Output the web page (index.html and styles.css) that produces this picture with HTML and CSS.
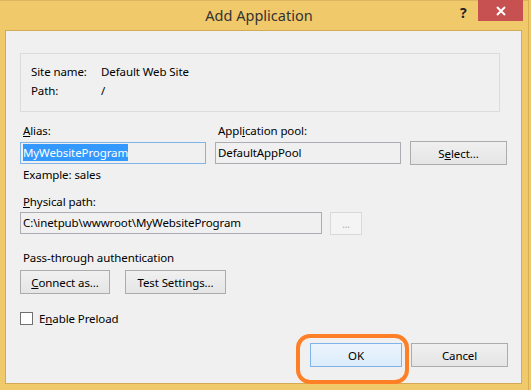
FILE: index.html
```html
<!DOCTYPE html>
<html lang="en">
<head>
    <meta charset="UTF-8">
    <meta name="viewport" content="width=device-width, initial-scale=1.0">
    <title>Add Application</title>
    <link rel="stylesheet" href="styles.css">
</head>
<body>

    <div class="window">
        <!-- 타이틀 바 -->
        <div class="titlebar">
            <div class="title">Add Application</div>
            <div class="help">?</div>
            <div class="close">
                <svg width="10" height="10" viewBox="0 0 10 10">
                    <path d="M1 1 L9 9 M9 1 L1 9" stroke="#fff" stroke-width="2"/>
                </svg>
            </div>
        </div>

        <div class="client">
            <div class="site-box">
                <div class="site-row"><span class="site-key">Site name:</span><span>Default Web Site</span></div>
                <div class="site-row"><span class="site-key">Path:</span><span>/</span></div>
            </div>

            <div class="alias-grid">
                <div class="label"><u>A</u>lias:</div>
                <div class="label">Appl<u>i</u>cation pool:</div>
                <div></div>
                <div class="field focused"><span class="selected">MyWebsiteProgram</span></div>
                <div class="field">DefaultAppPool</div>
                <button class="btn select-btn">S<u>e</u>lect...</button>
            </div>

            <div class="label hint">Example: sales</div>

            <div class="label path-label"><u>P</u>hysical path:</div>
            <div class="path-row">
                <div class="field path-field">C:\inetpub\wwwroot\MyWebsiteProgram</div>
                <button class="btn browse-btn" disabled>...</button>
            </div>

            <div class="label auth-label">Pass-through authentication</div>
            <div class="auth-row">
                <button class="btn connect-btn"><u>C</u>onnect as...</button>
                <button class="btn test-btn">Test Settings...</button>
            </div>

            <label class="check-row">
                <span class="checkbox"></span>
                <span>E<u>n</u>able Preload</span>
            </label>

            <div class="footer">
                <button class="btn ok-btn">OK</button>
                <button class="btn cancel-btn">Cancel</button>
            </div>
        </div>

        <!-- 강조 표시 -->
        <div class="highlight"></div>
    </div>

</body>
</html>
```

FILE: styles.css
```css
/* 기본 */
body {
    margin: 0;
    background-color: #f0c96b;
    font-family: 'Segoe UI', 'Noto Sans', 'Liberation Sans', sans-serif;
    font-size: 11.5px;
    letter-spacing: -0.1px;
    color: #000;
}

/* 창 프레임 */
.window {
    position: relative;
    width: 529px;
    height: 390px;
    border-top: 1px solid #dcb560;
    border-right: 1px solid #d8ae55;
    box-sizing: border-box;
}

.titlebar {
    position: relative;
    height: 29px;
}

.title {
    text-align: center;
    padding-right: 10px;
    padding-top: 4px;
    font-size: 14.5px;
    letter-spacing: 0;
    color: #333;
}

.help {
    position: absolute;
    left: 460px;
    top: 2px;
    font-size: 14px;
    font-weight: bold;
    color: #222;
}

.close {
    position: absolute;
    left: 478px;
    top: -1px;
    width: 45px;
    height: 21px;
    background-color: #c75050;
    display: flex;
    justify-content: center;
    align-items: center;
}

/* 클라이언트 영역 */
.client {
    margin-left: 5px;
    width: 517px;
    height: 354px;
    box-sizing: border-box;
    background-color: #f0f0f0;
    border: 1px solid #d3aa55;
    padding: 22px 13px 0 14px;
    display: flex;
    flex-direction: column;
}

.site-box {
    width: 480px;
    height: 59px;
    box-sizing: border-box;
    border: 1px solid #dcdcdc;
    padding: 8px 10px;
}

.site-row {
    display: flex;
    height: 19px;
    line-height: 19px;
}

.site-key {
    width: 70px;
}

.label {
    line-height: 15px;
    padding-left: 3px;
}

.alias-grid {
    display: grid;
    grid-template-columns: 186px 186px 97px;
    column-gap: 9px;
    row-gap: 3px;
    margin-top: 11px;
    align-items: end;
}

.field {
    height: 22px;
    box-sizing: border-box;
    border: 1px solid #abadb3;
    background-color: #f0f0f0;
    line-height: 20px;
    padding-left: 2px;
    white-space: nowrap;
    overflow: hidden;
}

.field.focused {
    border-color: #7eb4ea;
}

.selected {
    background-color: #3399ff;
    color: #fff;
    padding: 1px 0;
}

/* 버튼 */
.btn {
    font-family: inherit;
    font-size: 11.5px;
    letter-spacing: -0.1px;
    color: #000;
    height: 24px;
    box-sizing: border-box;
    border: 1px solid #acacac;
    background: linear-gradient(#f0f0f0, #e5e5e5);
    padding: 0;
}

.select-btn {
    width: 97px;
    margin-bottom: -1px;
}

.hint {
    margin-top: 3px;
}

.path-label {
    margin-top: 12px;
}

.path-row {
    display: flex;
    gap: 8px;
    margin-top: 3px;
}

.path-field {
    width: 302px;
}

.browse-btn {
    width: 32px;
    height: 23px;
    border-color: #d9d9d9;
    background: #f4f4f4;
    color: #aaa;
    font-size: 10px;
}

.auth-label {
    margin-top: 15px;
}

.auth-row {
    display: flex;
    gap: 15px;
    margin-top: 5px;
}

.connect-btn {
    width: 90px;
}

.test-btn {
    width: 101px;
}

.check-row {
    display: flex;
    align-items: center;
    gap: 6px;
    margin-top: 17px;
}

.checkbox {
    width: 13px;
    height: 13px;
    box-sizing: border-box;
    border: 1px solid #707070;
    background-color: #fff;
}

.footer {
    display: flex;
    justify-content: flex-end;
    gap: 9px;
    margin-top: 17px;
}

.ok-btn {
    width: 92px;
    border-color: #7eb4ea;
    background: linear-gradient(#ecf4fc, #dcecfc);
}

.cancel-btn {
    width: 97px;
}

/* 주황색 강조 상자 */
.highlight {
    position: absolute;
    left: 296px;
    top: 333px;
    width: 113px;
    height: 50px;
    box-sizing: border-box;
    border: 4px solid #ff7f27;
    border-radius: 14px;
}
```
